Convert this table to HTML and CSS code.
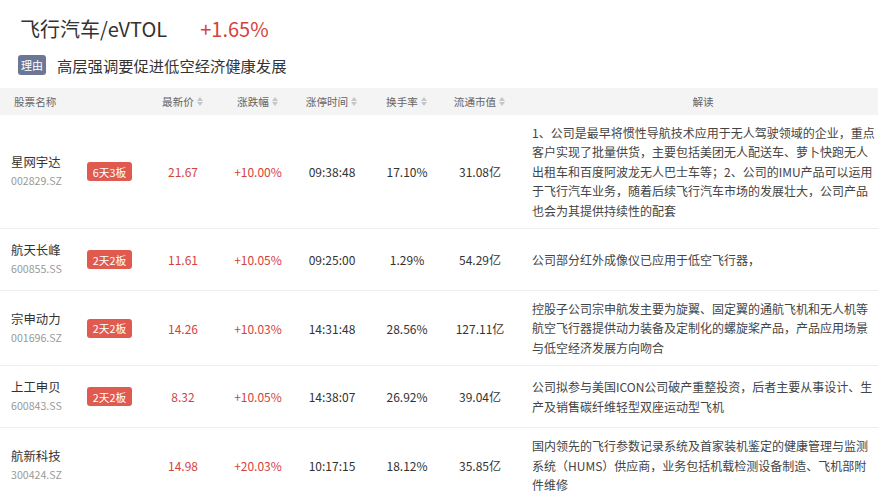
FILE: index.html
```html
<!DOCTYPE html>
<html lang="zh-CN">
<head>
<meta charset="utf-8">
<title>飞行汽车/eVTOL</title>
<link rel="stylesheet" href="styles.css">
</head>
<body>
<div class="page">
  <div class="title-row">
    <span class="title">飞行汽车/eVTOL</span>
    <span class="pct">+1.65%</span>
  </div>
  <div class="reason-row">
    <span class="reason-tag">理由</span>
    <span class="reason-text">高层强调要促进低空经济健康发展</span>
  </div>
  <table class="stocks">
    <colgroup>
      <col class="c-name"><col class="c-price"><col class="c-chg"><col class="c-time"><col class="c-turn"><col class="c-cap"><col class="c-desc">
    </colgroup>
    <thead>
      <tr>
        <th class="th-left">股票名称</th>
        <th><span class="sortable">最新价<i class="sort"></i></span></th>
        <th><span class="sortable">涨跌幅<i class="sort"></i></span></th>
        <th><span class="sortable">涨停时间<i class="sort"></i></span></th>
        <th><span class="sortable">换手率<i class="sort"></i></span></th>
        <th><span class="sortable">流通市值<i class="sort"></i></span></th>
        <th class="th-desc">解读</th>
      </tr>
    </thead>
    <tbody>
      <tr>
        <td class="name-cell"><div class="name-wrap"><div class="name-block"><div class="name">星网宇达</div><div class="code">002829.SZ</div></div><span class="badge">6天3板</span></div></td>
        <td class="num red">21.67</td>
        <td class="num red">+10.00%</td>
        <td class="num">09:38:48</td>
        <td class="num">17.10%</td>
        <td class="num">31.08亿</td>
        <td class="desc">1、公司是最早将惯性导航技术应用于无人驾驶领域的企业，重点<br>客户实现了批量供货，主要包括美团无人配送车、萝卜快跑无人<br>出租车和百度阿波龙无人巴士车等；2、公司的IMU产品可以运用<br>于飞行汽车业务，随着后续飞行汽车市场的发展壮大，公司产品<br>也会为其提供持续性的配套</td>
      </tr>
      <tr>
        <td class="name-cell"><div class="name-wrap"><div class="name-block"><div class="name">航天长峰</div><div class="code">600855.SS</div></div><span class="badge">2天2板</span></div></td>
        <td class="num red">11.61</td>
        <td class="num red">+10.05%</td>
        <td class="num">09:25:00</td>
        <td class="num">1.29%</td>
        <td class="num">54.29亿</td>
        <td class="desc">公司部分红外成像仪已应用于低空飞行器，</td>
      </tr>
      <tr>
        <td class="name-cell"><div class="name-wrap"><div class="name-block"><div class="name">宗申动力</div><div class="code">001696.SZ</div></div><span class="badge">2天2板</span></div></td>
        <td class="num red">14.26</td>
        <td class="num red">+10.03%</td>
        <td class="num">14:31:48</td>
        <td class="num">28.56%</td>
        <td class="num">127.11亿</td>
        <td class="desc">控股子公司宗申航发主要为旋翼、固定翼的通航飞机和无人机等<br>航空飞行器提供动力装备及定制化的螺旋桨产品，产品应用场景<br>与低空经济发展方向吻合</td>
      </tr>
      <tr>
        <td class="name-cell"><div class="name-wrap"><div class="name-block"><div class="name">上工申贝</div><div class="code">600843.SS</div></div><span class="badge">2天2板</span></div></td>
        <td class="num red">8.32</td>
        <td class="num red">+10.05%</td>
        <td class="num">14:38:07</td>
        <td class="num">26.92%</td>
        <td class="num">39.04亿</td>
        <td class="desc">公司拟参与美国ICON公司破产重整投资，后者主要从事设计、生<br>产及销售碳纤维轻型双座运动型飞机</td>
      </tr>
      <tr>
        <td class="name-cell"><div class="name-wrap"><div class="name-block"><div class="name">航新科技</div><div class="code">300424.SZ</div></div></div></td>
        <td class="num red">14.98</td>
        <td class="num red">+20.03%</td>
        <td class="num">10:17:15</td>
        <td class="num">18.12%</td>
        <td class="num">35.85亿</td>
        <td class="desc">国内领先的飞行参数记录系统及首家装机鉴定的健康管理与监测<br>系统（HUMS）供应商，业务包括机载检测设备制造、飞机部附<br>件维修</td>
      </tr>
    </tbody>
  </table>
</div>
</body>
</html>
```

FILE: styles.css
```css
* { box-sizing: border-box; }
html, body { margin: 0; padding: 0; background: #fff; }
body {
  font-family: "Noto Sans CJK SC", "Noto Sans", sans-serif;
  color: #333;
  overflow: hidden;
}
.page { width: 878px; }

.title-row {
  display: flex;
  align-items: center;
  gap: 33px;
  padding: 15px 0 0 20px;
  height: 43px;
  line-height: 28px;
  font-size: 20px;
}
.title { color: #333; }
.pct { color: #d4433d; }

.reason-row {
  display: flex;
  align-items: center;
  gap: 11px;
  margin-top: 12px;
  padding-left: 18px;
  height: 20px;
}
.reason-tag {
  display: inline-flex;
  align-items: center;
  justify-content: center;
  width: 28px;
  height: 20px;
  background: #6b7795;
  color: #fff;
  font-size: 11px;
  border-radius: 3px;
}
.reason-text {
  font-size: 15.3px;
  color: #333;
  line-height: 20px;
}

.stocks {
  margin-top: 13px;
  width: 878px;
  border-collapse: collapse;
  table-layout: fixed;
}
.c-name { width: 148px; }
.c-price { width: 70px; }
.c-chg { width: 80px; }
.c-time { width: 68px; }
.c-turn { width: 82px; }
.c-cap { width: 64px; }
.c-desc { width: 366px; }

.stocks thead tr { background: #f4f4f5; }
.stocks th {
  height: 27px;
  padding: 0;
  font-size: 10.6px;
  font-weight: normal;
  color: #666;
  text-align: center;
  white-space: nowrap;
}
.stocks th.th-left { text-align: left; padding-left: 14px; }
.stocks th.th-desc { padding-left: 20px; padding-right: 4px; }

.sortable {
  display: inline-flex;
  align-items: center;
  gap: 3px;
}
.sort {
  display: inline-flex;
  flex-direction: column;
  gap: 1px;
  width: 7px;
}
.sort::before, .sort::after {
  content: "";
  display: block;
  width: 0;
  height: 0;
  border-left: 3.5px solid transparent;
  border-right: 3.5px solid transparent;
}
.sort::before { border-bottom: 4px solid #c4c6cc; }
.sort::after { border-top: 4px solid #c4c6cc; }

.stocks tbody tr { border-bottom: 1px solid #eeeeee; }
.stocks td {
  padding: 8px 0;
  vertical-align: middle;
}
.name-cell { padding-left: 11px !important; }
.name-wrap {
  display: flex;
  align-items: center;
}
.name-block {
  width: 76px;
  padding: 4px 0;
}
.name {
  font-size: 12.4px;
  line-height: 19px;
  color: #333;
}
.code {
  font-size: 10.6px;
  line-height: 18px;
  color: #999;
}
.badge {
  display: inline-flex;
  align-items: center;
  justify-content: center;
  width: 45px;
  height: 19px;
  background: #e05a4f;
  color: #fff;
  font-size: 10.8px;
  border-radius: 3px;
}

.num {
  text-align: center;
  font-size: 12px;
  color: #333;
  white-space: nowrap;
}
.num.red { color: #d4433d; }

.desc {
  padding-left: 20px !important;
  padding-right: 4px !important;
  font-size: 12px;
  line-height: 19.4px;
  color: #444;
  white-space: nowrap;
}
```
